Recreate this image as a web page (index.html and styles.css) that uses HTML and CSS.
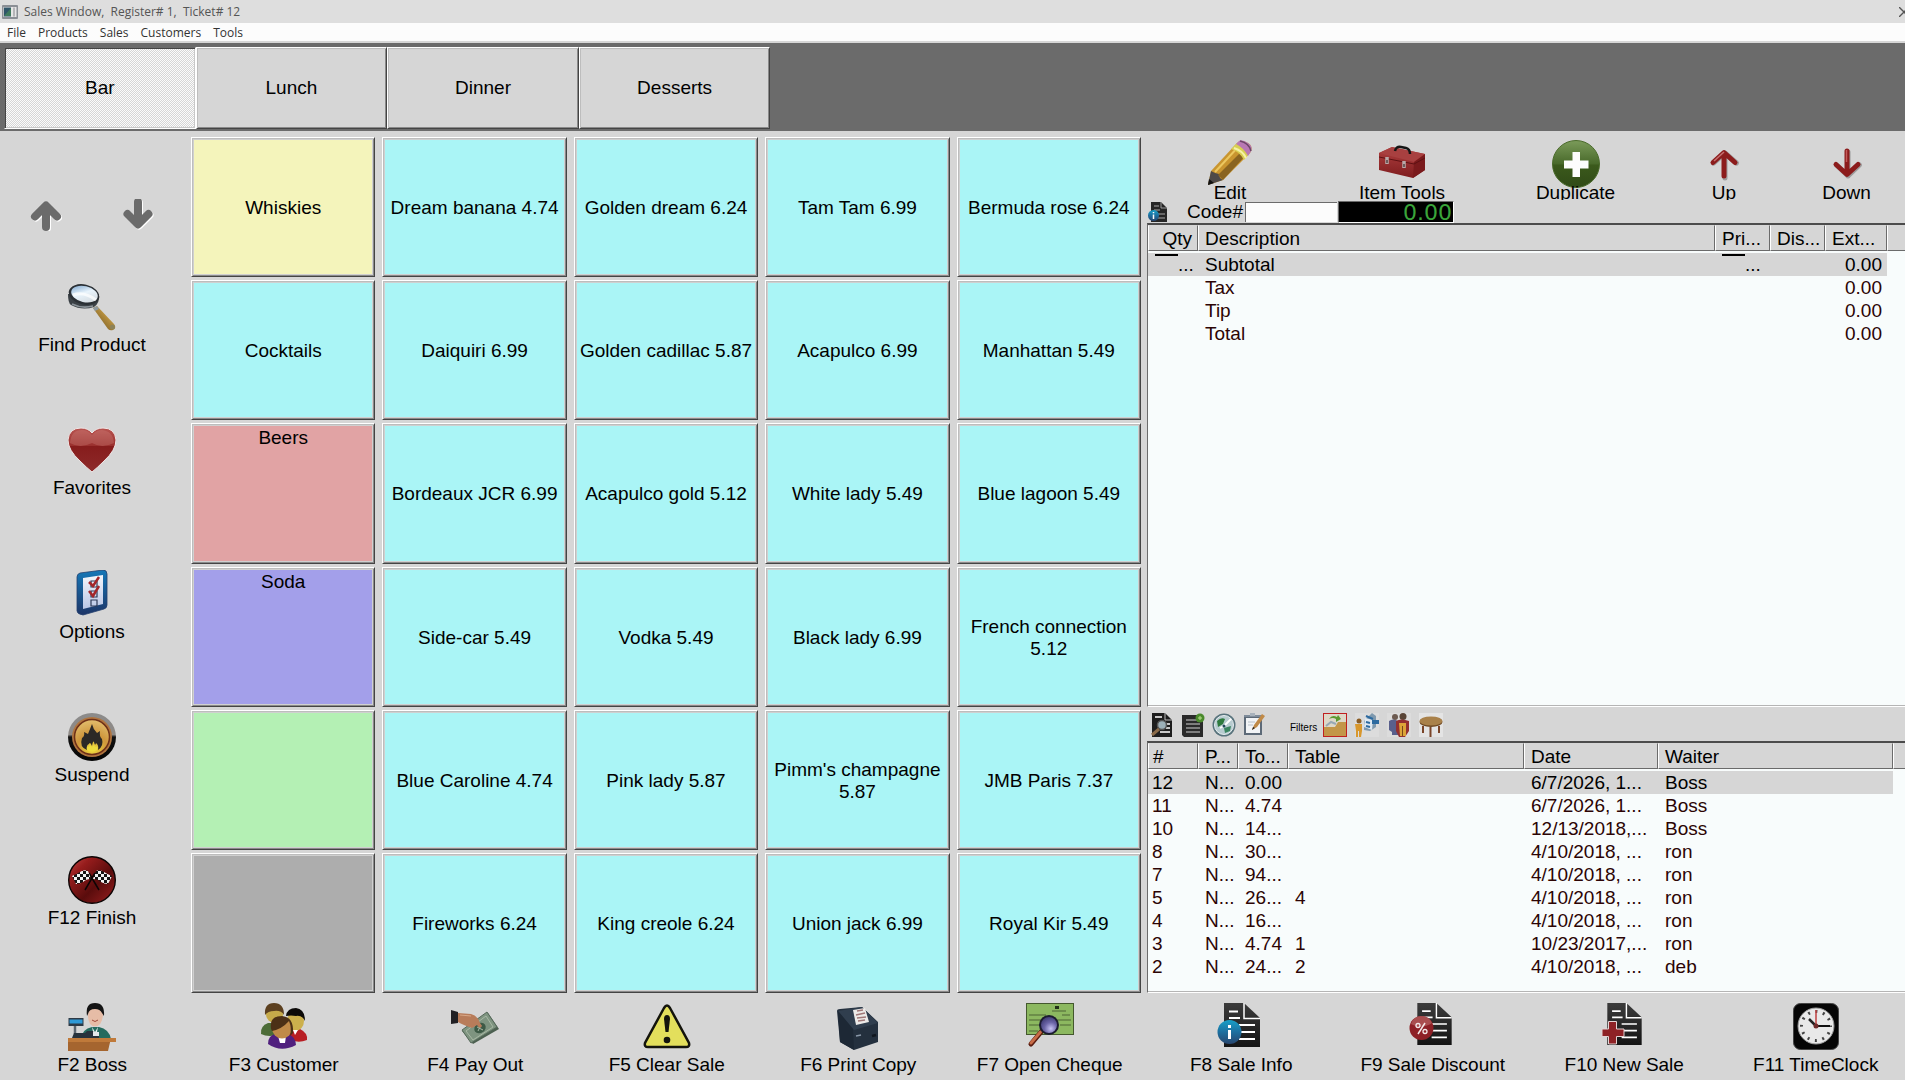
FILE: index.html
```html
<!DOCTYPE html>
<html lang="en">
<head>
<meta charset="utf-8">
<title>Sales Window</title>
<meta name="viewport" content="width=device-width, initial-scale=1">
<link rel="stylesheet" href="styles.css">
</head>
<body>
<svg class="defs" aria-hidden="true">
  <defs>
    <linearGradient id="gHeart" x1="0" y1="0" x2="0" y2="1"><stop offset="0" stop-color="#b85450"/><stop offset=".4" stop-color="#9a302e"/><stop offset=".42" stop-color="#861c1c"/><stop offset="1" stop-color="#8e2a2a"/></linearGradient>
    <linearGradient id="gLens" x1="0" y1="0" x2="1" y2="1"><stop offset="0" stop-color="#6f9cc8"/><stop offset=".45" stop-color="#e9f4fc"/><stop offset="1" stop-color="#cfd4d8"/></linearGradient>
    <linearGradient id="gWood" x1="0" y1="1" x2="1" y2="0"><stop offset="0" stop-color="#5e4518"/><stop offset=".6" stop-color="#b8913f"/><stop offset="1" stop-color="#7a5c22"/></linearGradient>
    <linearGradient id="gBlue" x1="0" y1="0" x2="0" y2="1"><stop offset="0" stop-color="#1578b8"/><stop offset="1" stop-color="#1d3567"/></linearGradient>
    <linearGradient id="gPage" x1="0" y1="0" x2="0" y2="1"><stop offset="0" stop-color="#f4f6fb"/><stop offset="1" stop-color="#b9c6e6"/></linearGradient>
    <linearGradient id="gRim" x1="0" y1="0" x2="0" y2="1"><stop offset="0" stop-color="#8b8b8b"/><stop offset=".45" stop-color="#8f8a86"/><stop offset=".5" stop-color="#111"/><stop offset="1" stop-color="#050505"/></linearGradient>
    <radialGradient id="gGold" cx=".5" cy=".85" r=".8"><stop offset="0" stop-color="#f0dc3c"/><stop offset=".55" stop-color="#cf963c"/><stop offset="1" stop-color="#dfb968"/></radialGradient>
    <linearGradient id="gRed" x1="0" y1="0" x2="1" y2="1"><stop offset="0" stop-color="#c04a48"/><stop offset=".25" stop-color="#961c1c"/><stop offset=".6" stop-color="#5a0c0c"/><stop offset="1" stop-color="#9a2020"/></linearGradient>
    <linearGradient id="gGreen" x1="0" y1="0" x2="0" y2="1"><stop offset="0" stop-color="#7b9b5a"/><stop offset=".5" stop-color="#48692a"/><stop offset=".52" stop-color="#3b5a1c"/><stop offset="1" stop-color="#304a17"/></linearGradient>
    <linearGradient id="gDoc" x1="0" y1="0" x2="0" y2="1"><stop offset="0" stop-color="#3c3c3c"/><stop offset="1" stop-color="#141414"/></linearGradient>
    <linearGradient id="gInfo" x1="0" y1="0" x2="0" y2="1"><stop offset="0" stop-color="#18a0c8"/><stop offset=".5" stop-color="#1d6f9f"/><stop offset="1" stop-color="#27456e"/></linearGradient>
    <linearGradient id="gBox" x1="0" y1="0" x2="0" y2="1"><stop offset="0" stop-color="#b04040"/><stop offset="1" stop-color="#7e1c1e"/></linearGradient>
    <radialGradient id="gSphere" cx=".6" cy=".7" r=".7"><stop offset="0" stop-color="#c8c4f4"/><stop offset=".5" stop-color="#6c66a8"/><stop offset="1" stop-color="#3c3870"/></radialGradient>
    <pattern id="check" width="6" height="6" patternUnits="userSpaceOnUse"><rect width="6" height="6" fill="#f2f2f2"/><rect width="3" height="3" fill="#151515"/><rect x="3" y="3" width="3" height="3" fill="#151515"/></pattern>
    <symbol id="doc" viewBox="0 0 36 44">
      <path d="M0 0H20L36 15V44H0Z" fill="url(#gDoc)"/><path d="M20 0V15.500H36" stroke="#fff" stroke-width="1.500" fill="none"/>
      <path d="M5 8.500H14M5 15H16M15 22H31M15 29H31M15 36H31" stroke="#fff" stroke-width="1.800"/>
    </symbol>
  </defs>
</svg>

<header class="titlebar">
  <svg class="app-icon" viewBox="0 0 16 14"><rect width="16" height="14" rx="1" fill="#8b8f95"/><rect x="1.500" y="2" width="13" height="10" fill="#e6e6e6"/><rect x="2" y="2.500" width="7" height="9" fill="#2f5568"/><path d="M2 11 9 3V11Z" fill="#3f7a5c"/><rect x="11" y="2.500" width="2" height="9" fill="#b5b5b8"/></svg>
  <h1 class="title">Sales Window,&nbsp; Register# 1,&nbsp; Ticket# 12</h1>
  <button class="close" aria-label="Close"><svg viewBox="0 0 10 10"><path d="M0 0 10 10M10 0 0 10" stroke="#555" stroke-width="1.400" fill="none"/></svg></button>
</header>
<nav class="menubar">
  <button>File</button><button>Products</button><button>Sales</button><button>Customers</button><button>Tools</button>
</nav>
<div class="tabstrip">
  <div class="tabs" role="tablist">
    <button role="tab" aria-selected="true" class="tab tab-active">Bar</button>
    <button role="tab" aria-selected="false" class="tab">Lunch</button>
    <button role="tab" aria-selected="false" class="tab">Dinner</button>
    <button role="tab" aria-selected="false" class="tab">Desserts</button>
  </div>
</div>

<main class="main">
  <aside class="side">
    <div class="pager">
      <button class="flat" aria-label="Previous page"><svg class="icon32" viewBox="0 0 32 32"><path d="M17 7V28M6 17.500 17 6.500 28 17.500" stroke="#fff" stroke-width="8" stroke-linecap="round" stroke-linejoin="round" fill="none" transform="translate(0 1)"/><path d="M16 8V28M5 17.500 16 6.500 27 17.500" stroke="#6b6b6b" stroke-width="8" stroke-linecap="round" stroke-linejoin="round" fill="none"/></svg></button>
      <button class="flat" aria-label="Next page"><svg class="icon32" viewBox="0 0 32 32"><path d="M17 4V26M6.500 16 17 26.500 27.500 16" stroke="#fff" stroke-width="8" stroke-linecap="round" stroke-linejoin="round" fill="none"/><path d="M16 3V24M5.500 15 16 25.500 26.500 15" stroke="#6b6b6b" stroke-width="8" stroke-linecap="round" stroke-linejoin="round" fill="none"/></svg></button>
    </div>
    <button class="flat tool"><svg class="icon" viewBox="0 0 48 48"><path d="M25 25 29 23 46 41Q49 45 45 47 42 48 40 46Z" fill="url(#gWood)"/><path d="M25 25 29 23 31 26 27 28Z" fill="#8e9aa2"/><path d="M0 11Q0 20 3 22 14 28 26 24 32 20 31 11Z" fill="#3b4146"/><ellipse cx="16" cy="11.500" rx="15.500" ry="10" transform="rotate(13 16 11.500)" fill="#2b3035"/><ellipse cx="16.500" cy="11" rx="13.500" ry="8" transform="rotate(13 16 11)" fill="url(#gLens)"/><path d="M5 12Q16 8 28 17" stroke="#fff" stroke-width="3" fill="none" opacity=".7"/><path d="M4 21Q14 26 25 23" stroke="#8a9298" stroke-width="1.500" fill="none"/><circle cx="44.500" cy="44" r="2.500" fill="#8d8258"/></svg><span>Find Product</span></button>
    <button class="flat tool"><svg class="icon" viewBox="0 0 48 48"><path d="M24 46Q19 42 12 35 0 24 0 14 1 2 13 2 20 2 24 7 28 2 35 2 47 2 48 14 48 24 36 35 29 42 24 46Z" fill="url(#gHeart)" stroke="#efe6e6" stroke-width="1"/><path d="M2 17Q3 4 14 4 20 4 24 9 28 4 34 4 45 5 46 17 34 23 24 17 12 23 2 17Z" fill="#d48a86" opacity=".3"/></svg><span>Favorites</span></button>
    <button class="flat tool"><svg class="icon" viewBox="0 0 48 48"><path d="M12 3 35 0Q39 0 39 4V35Q39 38 36 39L15 45Q9 44 9 41V7Q9 4 12 3Z" fill="url(#gBlue)" stroke="#24406e" stroke-width=".8"/><path d="M15 8 35 5V34L15 39Z" fill="url(#gPage)"/><path d="M23 11h6v6h-6zM23 21h6v6h-6zM23 30h6v6h-6z" fill="none" stroke="#2e3a58" stroke-width="1.200"/><path d="M21 12 25 16 31 7M21 21 25 26 31 16" stroke="#a3262a" stroke-width="2.500" fill="none"/></svg><span>Options</span></button>
    <button class="flat tool"><svg class="icon" viewBox="0 0 48 48"><circle cx="24" cy="24" r="24" fill="url(#gRim)"/><circle cx="24" cy="24" r="20" fill="#b0743e"/><circle cx="24" cy="24" r="17.500" fill="url(#gGold)" stroke="#6e3018" stroke-width="1.500"/><path d="M24 11Q25 16 29 20L32 18Q31 23 34 26 36 33 30 37 31 32 28 30 27 34 26 29 25 27 24 33 22 28 21 31 18 32 19 37 11 34 14 25 17 23 16 19L20 21Q22 16 24 11Z" fill="#2c2926"/><path d="M19 37Q18 33 21 34 22 30 24 35 26 30 27 34 31 32 29 37 24 40 19 37Z" fill="#eedc3e"/></svg><span>Suspend</span></button>
    <button class="flat tool"><svg class="icon" viewBox="0 0 48 48"><circle cx="24" cy="24" r="23.300" fill="url(#gRed)" stroke="#0c0505" stroke-width="1.400"/><path d="M17 34 27 17M31 34 21 17" stroke="#0c0505" stroke-width="1.500"/><path d="M4 20Q9 18 12 16 16 13 20 15L23 23Q18 23 15 26 12 28 8 28Z" fill="url(#check)"/><path d="M44 20Q39 18 36 16 32 13 28 15L25 23Q30 23 33 26 36 28 40 28Z" fill="url(#check)"/></svg><span>F12 Finish</span></button>
  </aside>

  <section class="products" aria-label="Products">
    <button class="cell yellow">Whiskies</button><button class="cell">Dream banana 4.74</button><button class="cell">Golden dream 6.24</button><button class="cell">Tam Tam 6.99</button><button class="cell">Bermuda rose 6.24</button>
    <button class="cell">Cocktails</button><button class="cell">Daiquiri 6.99</button><button class="cell">Golden cadillac 5.87</button><button class="cell">Acapulco 6.99</button><button class="cell">Manhattan 5.49</button>
    <button class="cell red top">Beers</button><button class="cell">Bordeaux JCR 6.99</button><button class="cell">Acapulco gold 5.12</button><button class="cell">White lady 5.49</button><button class="cell">Blue lagoon 5.49</button>
    <button class="cell violet top">Soda</button><button class="cell">Side-car 5.49</button><button class="cell">Vodka 5.49</button><button class="cell">Black lady 6.99</button><button class="cell">French connection 5.12</button>
    <button class="cell green" aria-label="Empty category"></button><button class="cell">Blue Caroline 4.74</button><button class="cell">Pink lady 5.87</button><button class="cell">Pimm's champagne 5.87</button><button class="cell">JMB Paris 7.37</button>
    <button class="cell gray" aria-label="Empty category"></button><button class="cell">Fireworks 6.24</button><button class="cell">King creole 6.24</button><button class="cell">Union jack 6.99</button><button class="cell">Royal Kir 5.49</button>
  </section>

  <section class="ticket">
    <div class="actions">
      <button class="flat act"><svg class="icon" viewBox="0 0 48 48"><path d="M2 45 5 31 31 3Q35 -1 42 3 48 7 44 13L17 40Z" fill="#c9952f"/><path d="M2 45 5 31 9 33 13 34 14 38 17 40Z" fill="#4e4a48"/><path d="M2 45 3 39 8 43Z" fill="#111"/><path d="M12 35 37 10 41 14 17 40Z" fill="#8a6420"/><path d="M9 32 33 6" stroke="#ecc860" stroke-width="2"/><path d="M25 9 31 3Q40 6 44 13L38 20Q34 12 25 9Z" fill="#d8cf52"/><path d="M30 4 33 1Q36 -1 42 3 48 7 44 13L42 16Q38 8 30 4Z" fill="#b978b4"/><path d="M34 1Q43 3 45 11" stroke="#6d4668" stroke-width="1.500" fill="none"/><path d="M28 8Q37 11 40 18" stroke="#f6f2a8" stroke-width="2" fill="none"/></svg><span>Edit</span></button>
      <button class="flat act"><svg class="icon" viewBox="0 0 48 48"><path d="M1 13 14 7 47 14V30L35 38 1 30Z" fill="url(#gBox)"/><path d="M1 13 14 7 47 14 36 22Z" fill="#a84040"/><path d="M36 22 47 14V30L35 38Z" fill="#7a1a1c"/><path d="M1 17 36 24 47 18" stroke="#5e1012" stroke-width="1" fill="none"/><path d="M17 11Q18 6 23 7L28 8Q32 9 32 14" stroke="#151515" stroke-width="2.500" fill="none"/><path d="M9 17V24M26 21V28" stroke="#b9a8a8" stroke-width="3.500"/><path d="M9 20V23M26 24V27" stroke="#544" stroke-width="1.500"/></svg><span>Item Tools</span></button>
      <button class="flat act"><svg class="icon" viewBox="0 0 48 48"><circle cx="24" cy="24" r="23.500" fill="url(#gGreen)" stroke="#4b6b2c"/><path d="M20.500 12h7.500v8.500h8.500v8H28V37h-7.500v-8.500H12v-8h8.500Z" fill="#fdfdfd"/></svg><span>Duplicate</span></button>
      <button class="flat act"><svg class="icon" viewBox="0 0 48 48"><path d="M25 14V38M13.500 23 25 13 36.500 23" stroke="#777" stroke-width="5" stroke-linecap="round" stroke-linejoin="round" fill="none" opacity=".6"/><path d="M24 13V36M13 22.500 24 12.500 35 22.500" stroke="#8c1c1c" stroke-width="5" stroke-linecap="round" stroke-linejoin="round" fill="none"/><path d="M14 21 24 12" stroke="#c67070" stroke-width="1.500"/></svg><span>Up</span></button>
      <button class="flat act"><svg class="icon" viewBox="0 0 48 48"><path d="M25 12V36M13.500 25 25 36 36.500 25" stroke="#777" stroke-width="5" stroke-linecap="round" stroke-linejoin="round" fill="none" opacity=".6"/><path d="M24 11V34M13 24.500 24 34.500 35 24.500" stroke="#8c1c1c" stroke-width="5" stroke-linecap="round" stroke-linejoin="round" fill="none"/><path d="M23.500 10V22" stroke="#c25a5a" stroke-width="1.500"/></svg><span>Down</span></button>
    </div>

    <div class="coderow">
      <button class="flat" aria-label="Sale info"><svg class="icon20" viewBox="0 0 20 20"><path d="M3 0H13L19 6V20H3Z" fill="#262626"/><path d="M13 0V6H19" stroke="#999" fill="none"/><path d="M6 4H11M6 8H12M10 12H17M10 16H17" stroke="#aaa"/><circle cx="5.500" cy="13.500" r="5.500" fill="url(#gInfo)"/><path d="M5.500 10V11.300M5.500 12.500V17" stroke="#fff" stroke-width="1.500"/></svg></button>
      <label for="code">Code#</label>
      <input id="code" class="code" type="text">
      <output class="display">0.00</output>
    </div>

    <div class="list list-items">
      <table>
        <colgroup><col class="w-qty"><col><col class="w-num"><col class="w-num"><col class="w-ext"><col class="w-scroll"></colgroup>
        <thead><tr><th class="right">Qty</th><th>Description</th><th>Pri...</th><th>Dis...</th><th>Ext...</th><th></th></tr></thead>
        <tbody>
          <tr class="selected"><td class="right"><i class="rule"></i>...</td><td>Subtotal</td><td><i class="rule"></i>...</td><td></td><td class="right">0.00</td><td class="clear"></td></tr>
          <tr><td></td><td>Tax</td><td></td><td></td><td class="right">0.00</td><td></td></tr>
          <tr><td></td><td>Tip</td><td></td><td></td><td class="right">0.00</td><td></td></tr>
          <tr><td></td><td>Total</td><td></td><td></td><td class="right">0.00</td><td></td></tr>
        </tbody>
      </table>
    </div>

    <div class="filterbar">
      <div class="iconset">
      <button class="flat" aria-label="Search tickets"><svg class="icon24" viewBox="0 0 24 24"><path d="M2 0H15L22 7V24H2Z" fill="#1d1d1d"/><path d="M15 0V7H22" stroke="#bbb" fill="none"/><path d="M5 4H12M16 11H20M16 15H20M10 19H20" stroke="#fff" stroke-width="1.500"/><circle cx="12" cy="12" r="4.500" fill="#9cb0b8" stroke="#555" stroke-width="1.500"/><path d="M9 16 2 22" stroke="#8a6a48" stroke-width="3"/></svg></button>
      <button class="flat" aria-label="New ticket"><svg class="icon24" viewBox="0 0 24 24"><path d="M1 2H22V24H3L1 22Z" fill="#2a2a2a"/><path d="M5 7H16M5 11H19M5 15H19M5 19H19" stroke="#999" stroke-width="1.500"/><circle cx="19" cy="5" r="4.500" fill="#4a8a2c"/><path d="M19 3V7M17 5H21" stroke="#b6e08a" stroke-width="1"/></svg></button>
      <button class="flat" aria-label="Recent tickets"><svg class="icon24" viewBox="0 0 24 24"><circle cx="12" cy="12" r="11.500" fill="#58737c"/><circle cx="12" cy="12" r="9.500" fill="#b8ccd0" stroke="#e8eef0"/><path d="M5 8Q9 4 13 6L11 11 6 14Z" fill="#2e7a3e"/><path d="M12 15 19 13 18 18 13 20Z" fill="#3a8560"/><path d="M12 13 19 6M12 13 8 15" stroke="#fff" stroke-width="1.800"/><circle cx="12" cy="13" r="1.500" fill="#244a5a"/></svg></button>
      <button class="flat" aria-label="Edit notes"><svg class="icon24" viewBox="0 0 24 24"><rect x="1" y="2" width="18" height="20" fill="#5d6a78"/><rect x="3" y="5" width="14" height="15" fill="#f2f4f6"/><path d="M1 2H19V4H1Z" fill="#7f8c9a"/><rect x="7" width="5" height="3" fill="#a8b2bc"/><path d="M5 9H12M5 12H10" stroke="#b8c0c8"/><path d="M9 17 11 12 19 1 22 3 14 14Z" fill="#c08a48"/><path d="M9 17 10 14 12 15Z" fill="#222"/></svg></button>
      </div>
      <span class="filter-label">Filters</span>
      <div class="iconset filters">
      <button class="flat" aria-label="Open tickets filter"><svg class="icon24" viewBox="0 0 24 24"><rect x=".5" y=".5" width="23" height="23" fill="#ded8c8" stroke="#c02020"/><path d="M1 14H12L15 9H23V23H1Z" fill="#c39648"/><path d="M3 13 8 9 13 11" stroke="#98a8b4" stroke-width="2" fill="none"/><path d="M6 6Q9 1 14 4L15 2 18 6 13 9V6Q10 4 6 6Z" fill="#5c9a30"/></svg></button>
      <button class="flat" aria-label="Register filter"><svg class="icon24" viewBox="0 0 24 24"><rect width="24" height="24" fill="#dcdcdc"/><circle cx="4" cy="8" r="2.500" fill="#8a5c24"/><path d="M0 11H7V18L6 24H4V18H3V24H1V18Z" fill="#d8972c"/><path d="M9 8 17 0 21 3V14L15 18 9 17Z" fill="#7f99ae"/><path d="M10 5 18 7 17 17 9 14Z" fill="#dfe9f2"/><path d="M11 3 18 6M17 8H23V10H17M11 9 15 10M11 13 15 14" stroke="#2c6aa0" stroke-width="2" fill="none"/></svg></button>
      <button class="flat" aria-label="Customer filter"><svg class="icon24" viewBox="0 0 24 24"><rect width="24" height="24" fill="#dcdcdc"/><circle cx="8" cy="4" r="3" fill="#6c5a50"/><circle cx="16" cy="3.500" r="3.500" fill="#584436"/><path d="M2 8Q6 5 11 8V22H5V19L2 17Z" fill="#595f8c"/><path d="M9 8Q14 5 22 8V18L18 24H12L9 18Z" fill="#943030"/><path d="M12 10H19V23H13Z" fill="#dda438"/><path d="M15.500 13V23" stroke="#784818"/></svg></button>
      <button class="flat" aria-label="Table filter"><svg class="icon24" viewBox="0 0 24 24"><rect width="24" height="24" fill="#e4e4e4"/><ellipse cx="12" cy="9" rx="11.500" ry="5" fill="#6c4620"/><ellipse cx="12" cy="8" rx="11.500" ry="4.500" fill="#a9814a"/><path d="M4 13V20M20 13V20M11.500 14V24" stroke="#7a4428" stroke-width="2"/></svg></button>
      </div>
    </div>

    <div class="list list-tickets">
      <table>
        <colgroup><col class="w-qty"><col class="w-paid"><col class="w-total"><col><col class="w-date"><col class="w-waiter"><col class="w-edge"></colgroup>
        <thead><tr><th>#</th><th>P...</th><th>To...</th><th>Table</th><th>Date</th><th>Waiter</th><th></th></tr></thead>
        <tbody>
          <tr class="selected"><td>12</td><td>N...</td><td>0.00</td><td></td><td>6/7/2026, 1...</td><td>Boss</td><td class="clear"></td></tr>
          <tr><td>11</td><td>N...</td><td>4.74</td><td></td><td>6/7/2026, 1...</td><td>Boss</td><td></td></tr>
          <tr><td>10</td><td>N...</td><td>14...</td><td></td><td>12/13/2018,...</td><td>Boss</td><td></td></tr>
          <tr><td>8</td><td>N...</td><td>30...</td><td></td><td>4/10/2018, ...</td><td>ron</td><td></td></tr>
          <tr><td>7</td><td>N...</td><td>94...</td><td></td><td>4/10/2018, ...</td><td>ron</td><td></td></tr>
          <tr><td>5</td><td>N...</td><td>26...</td><td>4</td><td>4/10/2018, ...</td><td>ron</td><td></td></tr>
          <tr><td>4</td><td>N...</td><td>16...</td><td></td><td>4/10/2018, ...</td><td>ron</td><td></td></tr>
          <tr><td>3</td><td>N...</td><td>4.74</td><td>1</td><td>10/23/2017,...</td><td>ron</td><td></td></tr>
          <tr><td>2</td><td>N...</td><td>24...</td><td>2</td><td>4/10/2018, ...</td><td>deb</td><td></td></tr>
        </tbody>
      </table>
    </div>
  </section>
</main>

<footer class="footer">
  <button class="flat tool"><svg class="icon" viewBox="0 0 48 48"><path d="M13 36Q14 26 24 24H31Q41 26 43 36Z" fill="#246b5e"/><path d="M24 24 27 29 30 24 28 34H26Z" fill="#e8f0ee"/><path d="M20 12Q20 23 27 23.500 34 23 35 12 35 3 27 3 20 3 20 12Z" fill="#e6bca6"/><path d="M19 13Q17 0 27 0 37 0 36 13L34 10Q32 6 27 6 21 6 20 11Z" fill="#141414"/><path d="M24 17Q27 20 30 17" stroke="#a04838" fill="none"/><path d="M7 21V31" stroke="#5c6670" stroke-width="2.500"/><rect x=".5" y="15" width="15" height="8" fill="#2e3a46"/><rect x="1.500" y="16.500" width="13" height="4" fill="#2f9ad8"/><path d="M4 35 6 30H17L19 28H25L26 31H31V35Z" fill="#27323c"/><rect x="25" y="29" width="6" height="4" fill="#e4e8ea"/><path d="M0 35H43L40 48H0Z" fill="#a5652f"/><path d="M0 35H48V39H0Z" fill="#c07a3a"/></svg><span>F2 Boss</span></button>
  <button class="flat tool"><svg class="icon" viewBox="0 0 48 48"><path d="M1 31Q0 23 8 20H20V31Q9 35 1 31Z" fill="#4c6c38"/><path d="M28 36V26H40Q48 30 47 37 38 41 28 36Z" fill="#b81e24"/><ellipse cx="14.500" cy="11" rx="8.500" ry="9" fill="#c6aa4a"/><path d="M5 12Q4 0 14 0 24 0 24 12 21 7 14 8 8 8 5 12Z" fill="#5c4020"/><ellipse cx="35.500" cy="18" rx="8.500" ry="10" fill="#ccb04c"/><path d="M26 13Q27 5 36 5 45 6 45 18 42 12 36 13 31 12 26 13Z" fill="#0c0a08"/><path d="M33 27 35 32 38 27Z" fill="#fff"/><path d="M8 41Q8 32 16 31H28Q36 34 36 42 21 50 8 41Z" fill="#50207e"/><path d="M18 33H26L25 40H20Z" fill="#fff"/><ellipse cx="22" cy="25" rx="10" ry="10.500" fill="#c08a48"/><path d="M11 26Q9 13 22 13 34 14 33 30L30 33Q32 25 29 18 22 26 12 28Z" fill="#4c3016"/></svg><span>F3 Customer</span></button>
  <button class="flat tool"><svg class="icon" viewBox="0 0 48 48"><path d="M11 28 37 10 48 26 22 41Z" fill="#4c6050"/><path d="M11 27 36 9 46 24 20 40Z" fill="#7e9480" stroke="#56695a"/><path d="M15 28 35 13 42 24 22 37Z" fill="none" stroke="#a8b8a4"/><ellipse cx="29" cy="25" rx="6" ry="5" transform="rotate(-35 29 25)" fill="#3d5a46"/><path d="M30 22 27 28M26 24 32 27" stroke="#a8b8a4"/><path d="M7 10 20 11Q27 13 29 20L31 23Q29 27 26 22L21 25Q12 22 7 19Z" fill="#b87c5a"/><path d="M9 12 20 13" stroke="#d8a888"/><path d="M0 7 7 9V20L0 21Z" fill="#202024"/></svg><span>F4 Pay Out</span></button>
  <button class="flat tool"><svg class="icon" viewBox="0 0 48 48"><path d="M21 5Q24 0 27 5L46 40Q47 44 43 44H5Q1 44 2 40Z" fill="#e3df5c" stroke="#14140c" stroke-width="2.500"/><path d="M21 16Q21 12 24 12 27 12 27 16L25.500 29H22.500Z" fill="#14140c"/><circle cx="24" cy="37" r="3.300" fill="#14140c"/></svg><span>F5 Clear Sale</span></button>
  <button class="flat tool"><svg class="icon" viewBox="0 0 48 48"><path d="M3 8Q3 6 6 6L28 4 44 19V39L20 47 6 39Z" fill="#24303e"/><path d="M4 8 28 4 44 20 20 27Z" fill="#303e4e"/><path d="M4 8 19 26 20 47 6 39Z" fill="#1d2835"/><path d="M19 7 31 5 35 19 22 22Z" fill="#eceae8"/><path d="M23 8 29 7M22 12 31 10M23 15 32 14M24 18 31 17" stroke="#a07878" stroke-width="1.500"/><path d="M22 33 27 32" stroke="#8a98a8" stroke-width="1.500"/><path d="M38 33 42 32" stroke="#10161e" stroke-width="2.500"/></svg><span>F6 Print Copy</span></button>
  <button class="flat tool"><svg class="icon" viewBox="0 0 48 48"><rect x=".5" y=".5" width="47" height="31" fill="#8cb860" stroke="#44582e"/><path d="M26 8H40M3 12H20M36 12H44M3 17H45M3 22H14M34 22H45M3 28H12" stroke="#4c6434" stroke-width="1"/><rect x="29" y="3" width="4" height="3" fill="#223018"/><path d="M15 29 5 41" stroke="#5a1c10" stroke-width="5" stroke-linecap="round"/><path d="M14.500 29 5 40" stroke="#c86c48" stroke-width="3" stroke-linecap="round"/><circle cx="23" cy="22" r="9" fill="url(#gSphere)" stroke="#1c1c30" stroke-width="2"/></svg><span>F7 Open Cheque</span></button>
  <button class="flat tool"><svg class="icon" viewBox="0 0 48 48"><use href="#doc" x="7" y="0" width="36" height="44"/><circle cx="12.500" cy="29" r="12" fill="url(#gInfo)"/><path d="M12.500 22V25M12.500 27V36" stroke="#fff" stroke-width="3"/></svg><span>F8 Sale Info</span></button>
  <button class="flat tool"><svg class="icon" viewBox="0 0 48 48"><use href="#doc" x="8" y="0" width="35" height="42"/><circle cx="12.500" cy="25" r="12" fill="#8e2026"/><path d="M2 21Q12 27 23 20 20 13 12 13 5 13 2 21Z" fill="#b05a5a" opacity=".8"/><path d="M16 20 9 31" stroke="#f4eaea" stroke-width="1.500"/><circle cx="9" cy="22.500" r="2" fill="none" stroke="#f4eaea" stroke-width="1.300"/><circle cx="16" cy="28.500" r="2" fill="none" stroke="#f4eaea" stroke-width="1.300"/></svg><span>F9 Sale Discount</span></button>
  <button class="flat tool"><svg class="icon" viewBox="0 0 48 48"><use href="#doc" x="7" y="0" width="35" height="42"/><path d="M8.500 18.500h8v7.500H24v7.500h-7.500V41h-8v-7.500H2V26h6.500Z" fill="#8e2226" stroke="#e4d4d4" stroke-width="1"/></svg><span>F10 New Sale</span></button>
  <button class="flat tool"><svg class="icon" viewBox="0 0 48 48"><rect x="1.500" y=".5" width="45" height="46" rx="7" fill="#050505" stroke="#444"/><circle cx="24" cy="23" r="18" fill="#e9e9e9" stroke="#999"/><circle cx="24" cy="23" r="14.500" fill="none" stroke="#444" stroke-width="3" stroke-dasharray="2 5.592" stroke-dashoffset="1"/><path d="M17 16 24 23" stroke="#222" stroke-width="2.500"/><path d="M24 23H38" stroke="#111" stroke-width="2"/><path d="M24 7V24" stroke="#c04040" stroke-width="1.500"/><circle cx="24" cy="23" r="2.500" fill="#6e2a2a"/></svg><span>F11 TimeClock</span></button>
</footer>
</body>
</html>
```
FILE: styles.css
```css
* { box-sizing: border-box; }
body {
  margin: 0;
  min-height: 100vh;
  display: flex;
  flex-direction: column;
  background: #d6d6d6;
  color: #000;
  font: 19px/22px "Liberation Sans", Arial, sans-serif;
  overflow-x: hidden;
}
button, input, output { font: inherit; color: inherit; }
button { cursor: pointer; }
svg { display: block; }
.defs { position: absolute; width: 0; height: 0; }

.titlebar {
  display: flex;
  align-items: center;
  height: 23px;
  padding-left: 2px;
  background: #dedede;
  overflow: hidden;
}
.app-icon { width: 16px; height: 14px; margin-right: 6px; }
.title {
  margin: 0;
  flex: 1;
  color: #555;
  font: 12px/16px "Open Sans", "Noto Sans", sans-serif;
}
.close { border: 0; padding: 0; background: none; margin-right: -4px; }
.close svg { width: 10px; height: 10px; }
.menubar {
  display: flex;
  gap: 12px;
  height: 20px;
  padding-left: 7px;
  background: #fcfcfc;
  border-bottom: 2px solid #d6d6d6;
}
.menubar button {
  border: 0;
  padding: 2px 0 0;
  background: none;
  color: #333;
  font: 12px/16px "Open Sans", "Noto Sans", sans-serif;
}

.tabstrip { padding: 4px 4px 2px; background: #6b6b6b; }
.tabs { display: grid; grid-template-columns: repeat(4, 1fr); width: 40.4%; height: 82px; }
.tab {
  padding: 0;
  background: #d6d6d6;
  border: 1px solid;
  border-color: #fff #444 #444 #fff;
  box-shadow: inset 1px 1px #bdbdbd, inset -1px -1px #8a8a8a;
}
.tab-active {
  background: repeating-conic-gradient(#fbfbfb 0 25%, #d6d6d6 0 50%) 0 0 / 2px 2px;
  border-color: #6b6b6b #fff #fff #6b6b6b;
  box-shadow: inset 1px 1px #444, inset -1px -1px #c8c8c8;
}

.main {
  flex: 1;
  display: grid;
  grid-template-columns: 184fr 7fr 950fr 6fr 758fr;
  grid-template-areas: "side . products . ticket";
  padding-top: 6px;
}
.side, .products {
  display: grid;
  grid-template-rows: repeat(6, 1fr);
  row-gap: 3px;
}
.side { grid-area: side; }
.products {
  grid-area: products;
  grid-template-columns: repeat(5, 1fr);
  column-gap: 7px;
}
.ticket { grid-area: ticket; display: flex; flex-direction: column; min-width: 0; }

.flat { border: 0; padding: 0; background: none; }
.icon { width: 48px; height: 48px; }
.icon32 { width: 32px; height: 32px; }
.icon24 { width: 24px; height: 24px; }
.icon20 { width: 20px; height: 20px; }
.pager { display: grid; grid-template-columns: 1fr 1fr; padding-top: 16px; }
.pager .flat { display: flex; align-items: center; justify-content: center; }
.tool {
  display: flex;
  flex-direction: column;
  align-items: center;
  justify-content: flex-start;
  gap: 3px;
  padding-top: 3px;
  white-space: nowrap;
}

.cell {
  display: flex;
  align-items: center;
  justify-content: center;
  padding: 2px 1px 0;
  background: #aaf5f6;
  border: 1px solid;
  border-color: #fff #444 #444 #fff;
  box-shadow: inset 1px 1px #bdbdbd, inset -1px -1px #8a8a8a, inset 0 0 0 2px #d0d0d0;
}
.yellow { background: #f4f4bb; }
.red { background: #e1a3a4; }
.violet { background: #a39fea; }
.green { background: #b4f0b4; }
.gray { background: #adadad; }
.top { align-items: flex-start; padding-top: 3px; }

.actions {
  display: grid;
  grid-template-columns: 166fr 178fr 169fr 128fr 117fr;
  padding-top: 3px;
}
.act {
  display: flex;
  flex-direction: column;
  align-items: center;
  height: 60px;
  overflow: hidden;
}
.act svg { flex: none; }
.act span { margin-top: -6px; }
.coderow { display: flex; align-items: center; height: 23px; padding-left: 1px; }
.coderow label { margin: 0 2px 0 19px; }
.code {
  width: 92px;
  height: 20px;
  margin-right: 1px;
  padding: 0 2px;
  background: #fcfcfc;
  border: 0;
  border-top: 1px solid #6b6b6b;
  border-left: 1px solid #6b6b6b;
}
.display {
  width: 116px;
  height: 22px;
  padding-right: 1px;
  background: #000;
  border: 1px solid;
  border-color: #6b6b6b #fff #fff #6b6b6b;
  color: #3aa53a;
  font: 22px/22px "DejaVu Sans", sans-serif;
  text-align: right;
}

.list {
  background: #f8fcfc;
  border-top: 2px solid #4c4c4c;
  border-left: 1px solid #6b6b6b;
  border-bottom: 1px solid #fff;
  box-shadow: inset 0 -1px #b5b5b5;
  min-height: 0;
}
.list-items { flex: 486 0 0; }
.list-tickets { flex: 251 0 0; }
table { width: 100%; table-layout: fixed; border-collapse: separate; border-spacing: 0; }
th, td { padding: 0 0 0 7px; text-align: left; font-weight: normal; white-space: nowrap; overflow: hidden; }
th {
  height: 26px;
  padding-top: 2px;
  padding-left: 6px;
  background: #d6d6d6;
  border: 1px solid;
  border-color: #d6d6d6 #6b6b6b #6b6b6b #fff;
}
td { height: 23px; color: #2c0404; line-height: 23px; }
tbody::before { content: ""; display: block; height: 2px; }
.selected td { background: #d6d6d6; color: #000; }
.selected td.clear { background: none; }
.right { text-align: right; padding-right: 5px; }
td.right:first-child { padding-right: 7px; }
th:last-child { border-right: 0; }
.rule { display: inline-block; width: 23px; height: 2px; background: #000; vertical-align: top; margin-top: 1px; }
.w-qty { width: 50px; }
.w-num { width: 55px; }
.w-ext { width: 62px; }
.w-scroll { width: 18px; }
.w-paid { width: 40px; }
.w-total { width: 50px; }
.w-date { width: 134px; }
.w-waiter { width: 235px; }
.w-edge { width: 12px; }
.list-tickets td:first-child, .list-tickets th:first-child { padding-left: 4px; }

.filterbar { display: flex; align-items: center; height: 34px; padding: 1px 0 0 3px; }
.iconset { display: flex; gap: 7px; }
.filters { gap: 8px; }
.filter-label {
  margin: 7px 6px 0 23px;
  font: 10px/12px "Liberation Sans", Arial, sans-serif;
}

.footer {
  display: grid;
  grid-template-columns: repeat(10, minmax(0, 1fr));
  gap: 7px;
  height: 87px;
  margin-right: -3px;
  padding-top: 7px;
}
```
